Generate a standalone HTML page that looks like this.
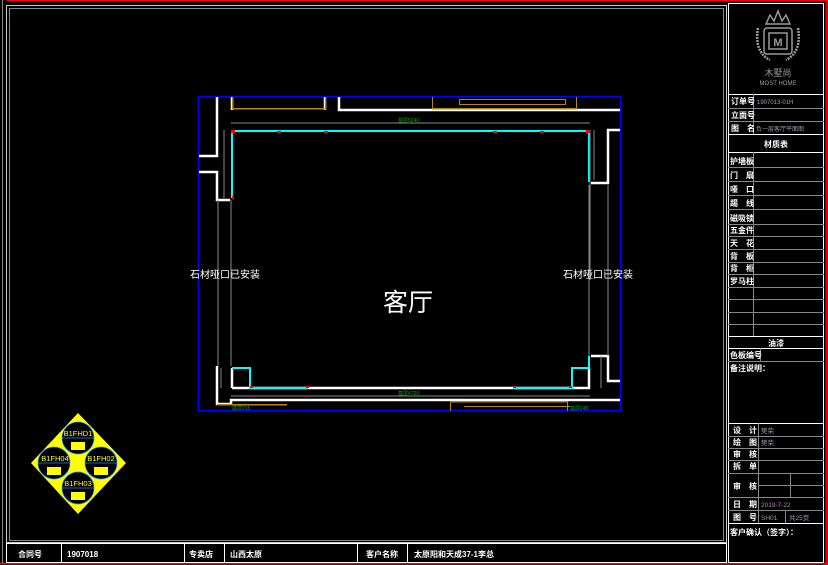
<!DOCTYPE html>
<html><head><meta charset="utf-8"><style>
html,body{margin:0;padding:0;background:#000;width:828px;height:565px;overflow:hidden}
svg{display:block}
text{font-family:"Liberation Sans","Noto Sans CJK SC",sans-serif}
.w{fill:#fff;font-size:8px;font-weight:bold}
.g{fill:#aaa;font-size:7px}
.y{fill:#ff0;font-size:8px}
</style></head><body>
<svg width="828" height="565" viewBox="0 0 828 565" xmlns="http://www.w3.org/2000/svg">
<rect width="828" height="565" fill="#000"/>
<line x1="7" y1="0.5" x2="828" y2="0.5" stroke="#f00" stroke-width="2"/>
<line x1="826.5" y1="0" x2="826.5" y2="565" stroke="#f00" stroke-width="2"/>
<line x1="0" y1="563.5" x2="828" y2="563.5" stroke="#f00" stroke-width="2"/>
<line x1="2.5" y1="0" x2="2.5" y2="563" stroke="#888"/>
<rect x="6.5" y="5.5" width="720" height="537" fill="none" stroke="#ccc"/>
<rect x="9.5" y="8.5" width="714" height="532" fill="none" stroke="#888"/>
<g stroke="#fff" fill="none">
<rect x="6.5" y="543.5" width="720" height="19"/>
<line x1="61.5" y1="543" x2="61.5" y2="563"/>
<line x1="184.5" y1="543" x2="184.5" y2="563"/>
<line x1="224.5" y1="543" x2="224.5" y2="563"/>
<line x1="357.5" y1="543" x2="357.5" y2="563"/>
<line x1="407.5" y1="543" x2="407.5" y2="563"/>
</g>
<text class="w" x="18" y="557">合同号</text>
<text class="w" x="67" y="557">1907018</text>
<text class="w" x="189" y="557">专卖店</text>
<text class="w" x="230" y="557">山西太原</text>
<text class="w" x="366" y="557">客户名称</text>
<text class="w" x="414" y="557">太原阳和天成37-1李总</text>
<g stroke="#fff" fill="none">
<rect x="728.5" y="3.5" width="95" height="559"/>
<line x1="728" y1="94.5" x2="824" y2="94.5"/>
<line x1="728" y1="134.5" x2="824" y2="134.5"/>
<line x1="728" y1="152.5" x2="824" y2="152.5"/>
<line x1="728" y1="336.5" x2="824" y2="336.5"/>
<line x1="728" y1="348.5" x2="824" y2="348.5"/>
<line x1="728" y1="423.5" x2="824" y2="423.5"/>
<line x1="728" y1="523.5" x2="824" y2="523.5"/>
</g>
<g stroke="#888" fill="none">
<line x1="728" y1="108.5" x2="824" y2="108.5"/>
<line x1="728" y1="121.5" x2="824" y2="121.5"/>
<line x1="753.5" y1="94" x2="753.5" y2="134"/>
<line x1="753.5" y1="152" x2="753.5" y2="336"/>
<path d="M728 167.5H824M728 181.5H824M728 195.5H824M728 209.5H824M728 224.5H824M728 236.5H824M728 249.5H824M728 262.5H824M728 274.5H824M728 287.5H824M728 299.5H824M728 312.5H824M728 324.5H824"/>
<line x1="760.5" y1="348" x2="760.5" y2="361"/>
<line x1="728" y1="361.5" x2="824" y2="361.5"/>
<path d="M728 436.5H824M728 448.5H824M728 460.5H824M728 473.5H824M758 485.5H824M728 497.5H824M728 510.5H824"/>
<line x1="758.5" y1="423" x2="758.5" y2="523"/>
<line x1="790.5" y1="473" x2="790.5" y2="497"/>
<line x1="785.5" y1="510" x2="785.5" y2="523"/>
</g>
<g stroke="#999" fill="none" stroke-width="1.5">
<path d="M758 28 Q754 52 770 60 M798 28 Q802 52 786 60" stroke-dasharray="2 1" stroke-width="2.5"/>
<rect x="764" y="28" width="28" height="26" rx="3"/>
<rect x="769" y="33" width="18" height="16"/>
<path d="M766 24 L770 15 L774 21 L778 11 L782 21 L786 15 L790 24 Z"/>
</g>
<text x="778" y="46" fill="#999" font-size="11" font-weight="bold" text-anchor="middle" font-family="Liberation Serif,serif">M</text>
<text x="778" y="76" fill="#999" font-size="9" text-anchor="middle">木墅尚</text>
<text x="778" y="85" fill="#999" font-size="6" text-anchor="middle">MOST HOME</text>
<text class="w" x="731" y="104" font-size="6.5">订单号</text>
<text x="757" y="104" fill="#99a" font-size="6">1907013-01H</text>
<text class="w" x="731" y="118" font-size="6.5">立面号</text>
<text class="w" x="731" y="131" font-size="6.5">图　名</text>
<text x="756" y="131" fill="#99a" font-size="6">负一层客厅平面图</text>
<text class="w" x="776" y="147" font-size="8.5" text-anchor="middle">材质表</text>
<g class="w" font-size="6.5">
<text x="730" y="164">护墙板</text><text x="730" y="178">门　扇</text><text x="730" y="192">哑　口</text>
<text x="730" y="206">踢　线</text><text x="730" y="221">磁吸锁</text><text x="730" y="233">五金件</text>
<text x="730" y="246">天　花</text><text x="730" y="259">背　板</text><text x="730" y="271">背　柜</text>
<text x="730" y="284">罗马柱</text>
</g>
<text class="w" x="776" y="346" font-size="8.5" text-anchor="middle">油漆</text>
<text class="w" x="730" y="358" font-size="6.5">色板编号</text>
<text class="w" x="730" y="371" font-size="6.5">备注说明：</text>
<g class="w" font-size="6.5">
<text x="733" y="433">设　计</text><text x="733" y="445">绘　图</text><text x="733" y="457">审　核</text>
<text x="733" y="469">拆　单</text><text x="733" y="489">审　核</text><text x="733" y="507">日　期</text>
<text x="733" y="520">图　号</text><text x="730" y="535">客户确认（签字）：</text>
</g>
<text x="761" y="433" fill="#99a" font-size="6.5">樊荣</text>
<text x="761" y="445" fill="#99a" font-size="6.5">樊荣</text>
<text x="761" y="507" fill="#a8a" font-size="6.5">2019-7-22</text>
<text x="761" y="520" fill="#99a" font-size="6.5">SH01</text>
<text x="789" y="520" fill="#99a" font-size="6.5">共25页</text>
<rect x="198.5" y="96.5" width="422" height="314" fill="none" stroke="#00f" stroke-width="1.5"/>
<g stroke="#fff" stroke-width="2.5" fill="none">
<path d="M217 97 V156 H199 M199 172 H217 V200 H230"/>
<path d="M339 97 V110 H620"/>
<path d="M232 97 V110 M325 97 V110"/>
<path d="M620 130 H608 V183 H591"/>
<path d="M591 356 H608 V381 H620"/>
<path d="M217 366 V404 H231 V400 H620"/>
<path d="M232 388 H589 V368"/>
<path d="M232 368 V388"/>
</g>
<g stroke="#0ff" stroke-width="2" fill="none">
<path d="M232 198 V131 H589 V182"/>
<path d="M232 368 H250 V388 H308 M513 388 H572 V368 H589 V356"/>
</g>
<g stroke="#888" fill="none">
<path d="M231 123 H590 M224 130 V198 M590 130 V280 M594 130 V180 M218 200 V366 M231 200 V366 M589 185 V356 M608 185 V356 M231 396 H590 M221 368 V388 M601 356 V388"/>
</g>
<g fill="#b8860b">
<rect x="232" y="108" width="94" height="1.5"/><rect x="232" y="97" width="1" height="12"/><rect x="325" y="97" width="1" height="12"/>
<rect x="432" y="108" width="145" height="1.5"/><rect x="432" y="97" width="1" height="12"/><rect x="576" y="97" width="1" height="12"/>
<rect x="459" y="99" width="106" height="1"/><rect x="459" y="104" width="106" height="1"/><rect x="459" y="99" width="1" height="6"/><rect x="565" y="99" width="1" height="6"/>
<rect x="450" y="401" width="118" height="1.5"/><rect x="450" y="401" width="1" height="10"/><rect x="567" y="401" width="1" height="10"/>
<rect x="464" y="406" width="106" height="1"/>
<rect x="217" y="404" width="70" height="1.5"/>
</g>
<g fill="#f00">
<rect x="231" y="130" width="4" height="3"/><rect x="277" y="131" width="4" height="2"/><rect x="324" y="131" width="4" height="2"/>
<rect x="493" y="131" width="4" height="2"/><rect x="540" y="131" width="4" height="2"/><rect x="586" y="130" width="4" height="3"/>
<rect x="232" y="196" width="2" height="3"/><rect x="250" y="386" width="3" height="2"/><rect x="306" y="386" width="3" height="2"/>
<rect x="513" y="386" width="3" height="2"/><rect x="569" y="386" width="3" height="2"/>
</g>
<g fill="#0a0" font-size="5">
<text x="398" y="122">基层5240</text><text x="398" y="395">基层4720</text>
<text x="232" y="410">基层215</text><text x="570" y="410">基层245</text>
</g>
<text x="190" y="278" fill="#fff" font-size="10">石材哑口已安装</text>
<text x="563" y="278" fill="#fff" font-size="10">石材哑口已安装</text>
<text x="408" y="311" fill="#fff" font-size="25" text-anchor="middle" font-family="Noto Serif CJK SC,serif">客厅</text>
<polygon points="78,413 126,463 78,514 31,463" fill="#ff0"/>
<g fill="#000" stroke="#28f" stroke-width="0.8">
<circle cx="78" cy="438" r="16"/><circle cx="54" cy="463" r="16"/><circle cx="101" cy="463" r="16"/><circle cx="78" cy="488" r="16"/>
<path d="M62 438 H94 M38 463 H70 M85 463 H117 M62 488 H94" fill="none"/>
</g>
<g fill="#ff0" font-size="7.5" text-anchor="middle">
<text x="78" y="436">B1FHD1</text><text x="55" y="461">B1FH04</text><text x="101" y="461">B1FH02</text><text x="78" y="486">B1FH03</text>
</g>
<g fill="#ff0"><rect x="71" y="442" width="14" height="8"/><rect x="47" y="467" width="14" height="8"/><rect x="94" y="467" width="14" height="8"/><rect x="71" y="492" width="14" height="8"/></g>
</svg>
</body></html>
